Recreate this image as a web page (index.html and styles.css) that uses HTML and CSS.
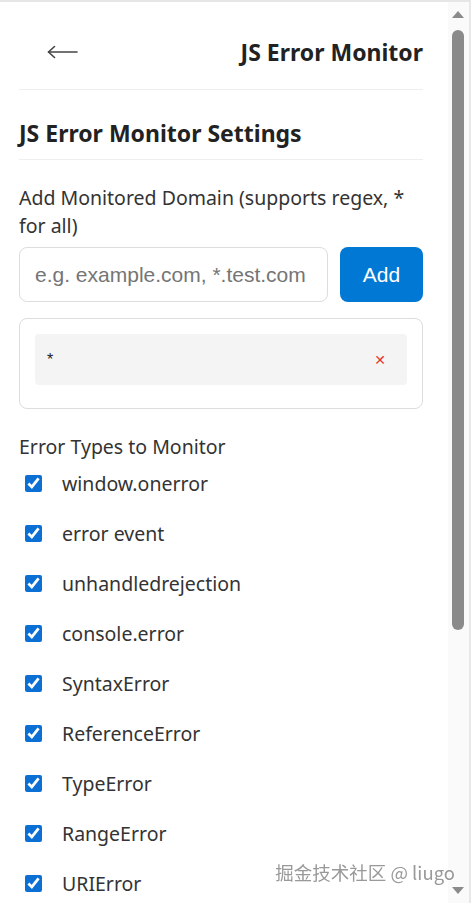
FILE: index.html
```html
<!DOCTYPE html>
<html lang="en">
<head>
<meta charset="utf-8">
<title>JS Error Monitor</title>
<link rel="stylesheet" href="styles.css">
</head>
<body>
<div class="frame">
  <main class="panel">
    <header class="topbar">
      <button class="back" type="button" aria-label="Back">
        <svg width="31" height="14" viewBox="0 0 31 14" fill="none" stroke="#444" stroke-width="1.6" stroke-linecap="round" stroke-linejoin="round">
          <path d="M1.5 7H30"/>
          <path d="M7.5 1.5L1.5 7l6 5.5"/>
        </svg>
      </button>
      <h1 class="app-title">JS Error Monitor</h1>
    </header>

    <h2 class="section-title">JS Error Monitor Settings</h2>

    <label class="field-label" for="domain">Add Monitored Domain (supports regex, * for all)</label>
    <div class="add-row">
      <input id="domain" class="domain-input" type="text" placeholder="e.g. example.com, *.test.com">
      <button class="add-btn" type="button">Add</button>
    </div>

    <ul class="domain-list">
      <li class="domain-item"><span class="domain-name">*</span><button class="remove" type="button" aria-label="Remove">&#x2715;</button></li>
    </ul>

    <p class="group-label">Error Types to Monitor</p>
    <div class="types">
      <label class="type"><input type="checkbox" checked><span>window.onerror</span></label>
      <label class="type"><input type="checkbox" checked><span>error event</span></label>
      <label class="type"><input type="checkbox" checked><span>unhandledrejection</span></label>
      <label class="type"><input type="checkbox" checked><span>console.error</span></label>
      <label class="type"><input type="checkbox" checked><span>SyntaxError</span></label>
      <label class="type"><input type="checkbox" checked><span>ReferenceError</span></label>
      <label class="type"><input type="checkbox" checked><span>TypeError</span></label>
      <label class="type"><input type="checkbox" checked><span>RangeError</span></label>
      <label class="type"><input type="checkbox" checked><span>URIError</span></label>
    </div>
  </main>

  <div class="scrollbar" aria-hidden="true">
    <span class="arrow up"></span>
    <span class="thumb"></span>
    <span class="track-rest"></span>
    <span class="arrow down"></span>
  </div>
</div>
<div class="watermark">掘金技术社区 @ liugo</div>
</body>
</html>
```

FILE: styles.css
```css
* { box-sizing: border-box; }

html, body {
  margin: 0;
  height: 100%;
  overflow: hidden;
  background: #fff;
}

body {
  font-family: "Noto Sans", "Open Sans", sans-serif;
  color: #333;
  border-top: 2px solid #e6e6e6;
}

.frame {
  display: flex;
  height: 100%;
}

.panel {
  flex: 1;
  padding: 0 25px 0 19px;
  min-width: 0;
}

/* header */
.topbar {
  display: flex;
  align-items: center;
  justify-content: space-between;
  height: 88px;
  padding-top: 12px;
  border-bottom: 1px solid #eee;
}

.back {
  display: flex;
  border: 0;
  background: none;
  padding: 0;
  margin-left: 28px;
}

.app-title,
.section-title {
  margin: 0;
  font-size: 23px;
  line-height: 30px;
  font-weight: 700;
  color: #222;
}

.section-title {
  padding: 28px 0 11px;
  border-bottom: 1px solid #eee;
}

/* domain form */
.field-label {
  display: block;
  margin-top: 24px;
  font-size: 19.5px;
  line-height: 28px;
}

.add-row {
  display: flex;
  gap: 12px;
  margin-top: 7px;
}

.domain-input {
  flex: 1;
  min-width: 0;
  height: 55px;
  padding: 0 15px;
  border: 1px solid #ddd;
  border-radius: 8px;
  font-family: "Liberation Sans", Arial, sans-serif;
  font-size: 21px;
  color: #333;
}

.domain-input::placeholder { color: #757575; }

.add-btn {
  width: 83px;
  height: 55px;
  border: 0;
  border-radius: 8px;
  background: #0078d4;
  color: #fff;
  font-family: "Liberation Sans", Arial, sans-serif;
  font-size: 21px;
}

.domain-list {
  list-style: none;
  margin: 16px 0 0;
  padding: 15px 15px 23px;
  border: 1px solid #ddd;
  border-radius: 8px;
}

.domain-item {
  display: flex;
  align-items: center;
  justify-content: space-between;
  height: 51px;
  padding: 0 21px 0 12px;
  background: #f4f4f4;
  border-radius: 4px;
  font-family: "Liberation Sans", Arial, sans-serif;
  font-size: 16px;
  color: #222;
}

.remove {
  border: 0;
  background: none;
  padding: 0;
  color: #e53935;
  font-family: "DejaVu Sans", sans-serif;
  font-size: 14px;
  font-weight: 700;
}

/* error types */
.group-label {
  margin: 24px 0 0;
  font-size: 19.5px;
  line-height: 28px;
}

.types {
  display: flex;
  flex-direction: column;
  gap: 22px;
  margin-top: 8px;
}

.type {
  display: flex;
  align-items: center;
  height: 28px;
  font-size: 19.5px;
}

.type input {
  width: 17px;
  height: 17px;
  margin: 0 20px 0 6px;
  accent-color: #0b6fd3;
}

/* scrollbar */
.scrollbar {
  width: 23px;
  flex: none;
  display: flex;
  flex-direction: column;
  align-items: center;
  padding: 0 6px 0 4px;
  background: #fafafa;
  border-right: 2px solid #e8e8e8;
}

.arrow {
  width: 0;
  height: 0;
  border-left: 6px solid transparent;
  border-right: 6px solid transparent;
}

.arrow.up {
  margin-top: 9px;
  border-bottom: 7px solid #8a8a8a;
}

.arrow.down {
  margin-bottom: 9px;
  border-top: 7px solid #8a8a8a;
}

.thumb {
  margin-top: 12px;
  width: 12px;
  height: 600px;
  background: #8a8a8a;
  border-radius: 6px;
}

.track-rest { flex: 1; }

.watermark {
  position: fixed;
  right: 16px;
  bottom: 18px;
  font-family: "Noto Sans CJK SC", "Noto Sans", sans-serif;
  font-size: 18.5px;
  color: #999;
  text-shadow: 0 0 2px #fff, 0 0 2px #fff;
}
```
